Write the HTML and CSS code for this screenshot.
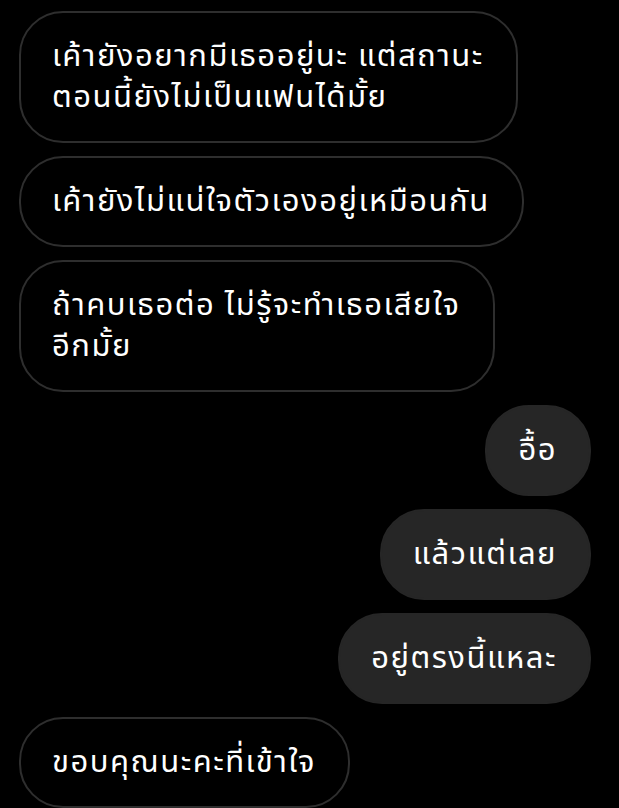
FILE: index.html
```html
<!DOCTYPE html>
<html lang="th">
<head>
  <meta charset="UTF-8" />
  <title>แชท</title>
  <link rel="stylesheet" href="styles.css">
</head>
<body>
  <div class="chat">
    <div class="msg them">เค้ายังอยากมีเธออยู่นะ แต่สถานะ<br>ตอนนี้ยังไม่เป็นแฟนได้มั้ย</div>
    <div class="msg them">เค้ายังไม่แน่ใจตัวเองอยู่เหมือนกัน</div>
    <div class="msg them">ถ้าคบเธอต่อ ไม่รู้จะทำเธอเสียใจ<br>อีกมั้ย</div>
    <div class="msg me">อื้อ</div>
    <div class="msg me">แล้วแต่เลย</div>
    <div class="msg me">อยู่ตรงนี้แหละ</div>
    <div class="msg them">ขอบคุณนะคะที่เข้าใจ</div>
  </div>
</body>
</html>
```
FILE: styles.css
```css
body {
  margin: 0;
  background: #000;
  color: #fff;
  font-family: "Noto Sans Thai", "Noto Sans", "DejaVu Sans", sans-serif;
}
.chat {
  display: flex;
  flex-direction: column;
  gap: 13px;
  padding: 11px 28px 0 19px;
}
.msg {
  box-sizing: border-box;
  max-width: 520px;
  padding: 23px 32px 23px 31px;
  font-size: 31px;
  line-height: 41px;
  letter-spacing: 1.5px;
  border-radius: 44px;
  white-space: nowrap;
}
.them {
  align-self: flex-start;
  border: 2px solid #2e2e2e;
}
.me {
  align-self: flex-end;
  background: #262626;
  border: 2px solid #262626;
}
```
